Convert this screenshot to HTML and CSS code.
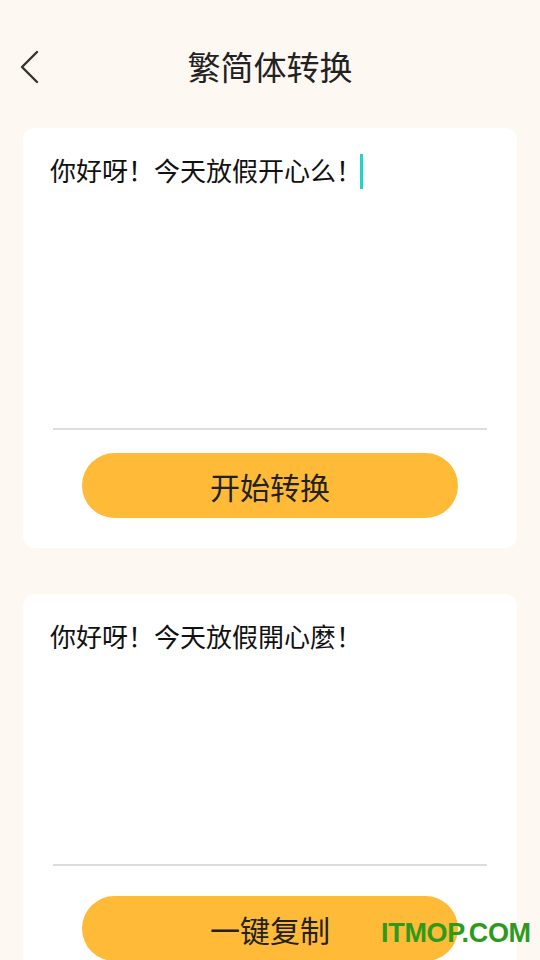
FILE: index.html
```html
<!DOCTYPE html>
<html lang="zh-CN">
<head>
<meta charset="utf-8">
<title>繁简体转换</title>
<link rel="stylesheet" href="styles.css">
</head>
<body>
<div class="page">
  <header class="header">
    <svg class="back" width="24" height="36" viewBox="0 0 24 36"><polyline points="19,2 4,17 19,32" fill="none" stroke="#333" stroke-width="2.4" stroke-linecap="round" stroke-linejoin="round"/></svg>
    <h1 class="title">繁简体转换</h1>
  </header>

  <section class="card card-input">
    <div class="text-area area-input"><span class="text">你好呀！今天放假开心么！</span><span class="cursor"></span></div>
    <div class="divider"></div>
    <button class="btn btn-convert">开始转换</button>
  </section>

  <section class="card card-output">
    <div class="text-area area-output"><span class="text">你好呀！今天放假開心麼！</span></div>
    <div class="divider"></div>
    <button class="btn btn-copy">一键复制</button>
  </section>

  <div class="watermark">ITMOP.COM</div>
</div>
</body>
</html>
```
FILE: styles.css
```css
html, body {
  margin: 0;
  padding: 0;
  background: #fef8f2;
}
body {
  width: 540px;
  height: 960px;
  overflow: hidden;
  font-family: "Noto Sans CJK SC", "Noto Sans", sans-serif;
  color: #111;
}
.page {
  position: relative;
  height: 960px;
  overflow: hidden;
}
.header {
  position: relative;
  height: 56px;
  padding-top: 38px;
  margin-bottom: 34px;
  display: flex;
  align-items: center;
  justify-content: center;
}
.back {
  position: absolute;
  left: 18px;
  top: 50px;
}
.title {
  margin: 0;
  font-size: 33px;
  font-weight: 400;
  line-height: 56px;
  color: #222;
}
.card {
  margin: 0 23px;
  background: #fff;
  border-radius: 12px;
  padding: 20px 30px 30px;
}
.card-output {
  margin-top: 46px;
}
.text-area {
  margin-left: -3px;
  font-size: 26px;
  line-height: 44px;
  display: flex;
  align-items: flex-start;
}
.area-input { height: 280px; }
.area-output { height: 250px; }
.cursor {
  display: inline-block;
  width: 3px;
  height: 35px;
  background: #1fd6c4;
  margin-left: -2px;
  margin-top: 6px;
}
.divider {
  height: 2px;
  background: #dddddd;
}
.btn {
  display: block;
  width: 376px;
  height: 65px;
  margin: 23px auto 0;
  border: none;
  border-radius: 33px;
  background: #ffba38;
  font-family: "Noto Sans CJK SC", "Noto Sans", sans-serif;
  font-size: 30px;
  color: #222;
  padding: 0;
}
.btn-copy {
  margin-top: 30px;
}
.watermark {
  position: absolute;
  left: 381px;
  top: 918px;
  font-family: "Liberation Sans", Arial, sans-serif;
  font-weight: 700;
  font-size: 27px;
  color: #2e9a1c;
  letter-spacing: -0.3px;
}
```
